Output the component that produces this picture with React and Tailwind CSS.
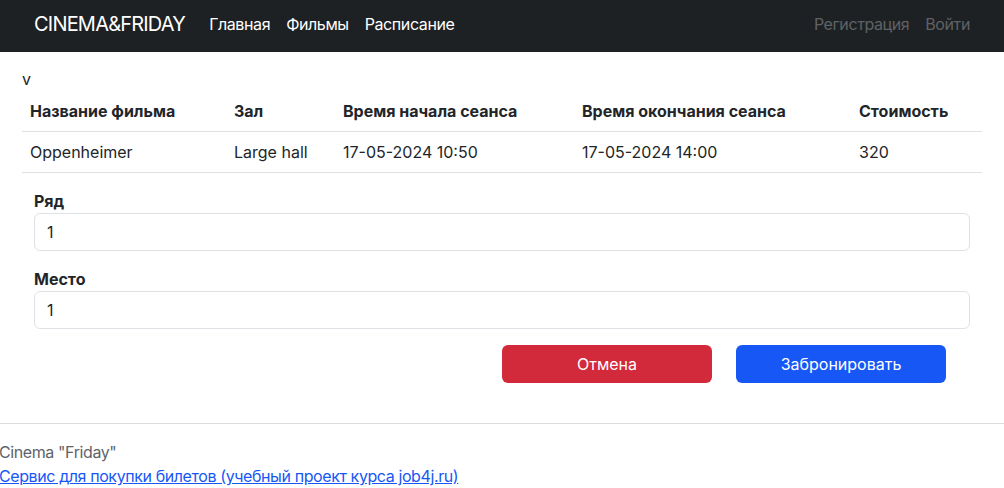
import React from "react";

const Navbar = () => (
  <nav className="h-[52px] bg-[#1e2124]">
    <div className="w-[960px] mx-auto px-3 pb-1 h-full flex items-center">
      <span className="text-[20px] text-white mr-4 leading-[30px] tracking-[-0.04em]">CINEMA&amp;FRIDAY</span>
      <div className="flex tracking-[-0.025em]">
        {["Главная", "Фильмы", "Расписание"].map((l) => (
          <a key={l} className="px-2 text-white">
            {l}
          </a>
        ))}
      </div>
      <div className="flex ml-auto tracking-[-0.025em]">
        {["Регистрация", "Войти"].map((l) => (
          <a key={l} className="pl-4 text-[#5e6165]">
            {l}
          </a>
        ))}
      </div>
    </div>
  </nav>
);

const Field = ({ label }) => (
  <div className="mb-4">
    <label className="block font-bold">{label}</label>
    <input
      readOnly
      value="1"
      className="block w-full h-[38px] px-3 border border-[#dee2e6] rounded-md outline-none"
    />
  </div>
);

export default function App() {
  return (
    <div className="bg-white text-[#212529] font-['Inter',sans-serif] text-base leading-6 h-[488px] overflow-hidden">
      <Navbar />
      <main className="w-[960px] mx-auto mt-[15px]">
        <div>v</div>
        <table className="w-full text-left">
          <thead>
            <tr className="border-b border-[#dee2e6]">
              <th className="py-2 px-2 w-[204px] font-bold">Название фильма</th>
              <th className="py-2 px-2 w-[109px] font-bold">Зал</th>
              <th className="py-2 px-2 w-[239px] font-bold">Время начала сеанса</th>
              <th className="py-2 px-2 w-[277px] font-bold">Время окончания сеанса</th>
              <th className="py-2 px-2 font-bold">Стоимость</th>
            </tr>
          </thead>
          <tbody>
            <tr className="border-b border-[#dee2e6]">
              <td className="py-2 px-2">Oppenheimer</td>
              <td className="py-2 px-2">Large hall</td>
              <td className="py-2 px-2">17-05-2024 10:50</td>
              <td className="py-2 px-2">17-05-2024 14:00</td>
              <td className="py-2 px-2">320</td>
            </tr>
          </tbody>
        </table>
        <form className="px-3 mt-4">
          <Field label="Ряд" />
          <Field label="Место" />
          <div className="flex justify-end gap-6 pr-6">
            <button type="button" className="w-[210px] h-[38px] rounded-md bg-[#d22a3b] text-white">
              Отмена
            </button>
            <button type="button" className="w-[210px] h-[38px] rounded-md bg-[#1757f5] text-white">
              Забронировать
            </button>
          </div>
        </form>
      </main>
      <footer className="mt-10 border-t border-[#dcdcdc] pt-4 tracking-[-0.025em]">
        <div className="text-[#5f6368] -ml-px">Cinema "Friday"</div>
        <a className="text-[#1757f5] underline -ml-px">Сервис для покупки билетов (учебный проект курса job4j.ru)</a>
      </footer>
    </div>
  );
}
